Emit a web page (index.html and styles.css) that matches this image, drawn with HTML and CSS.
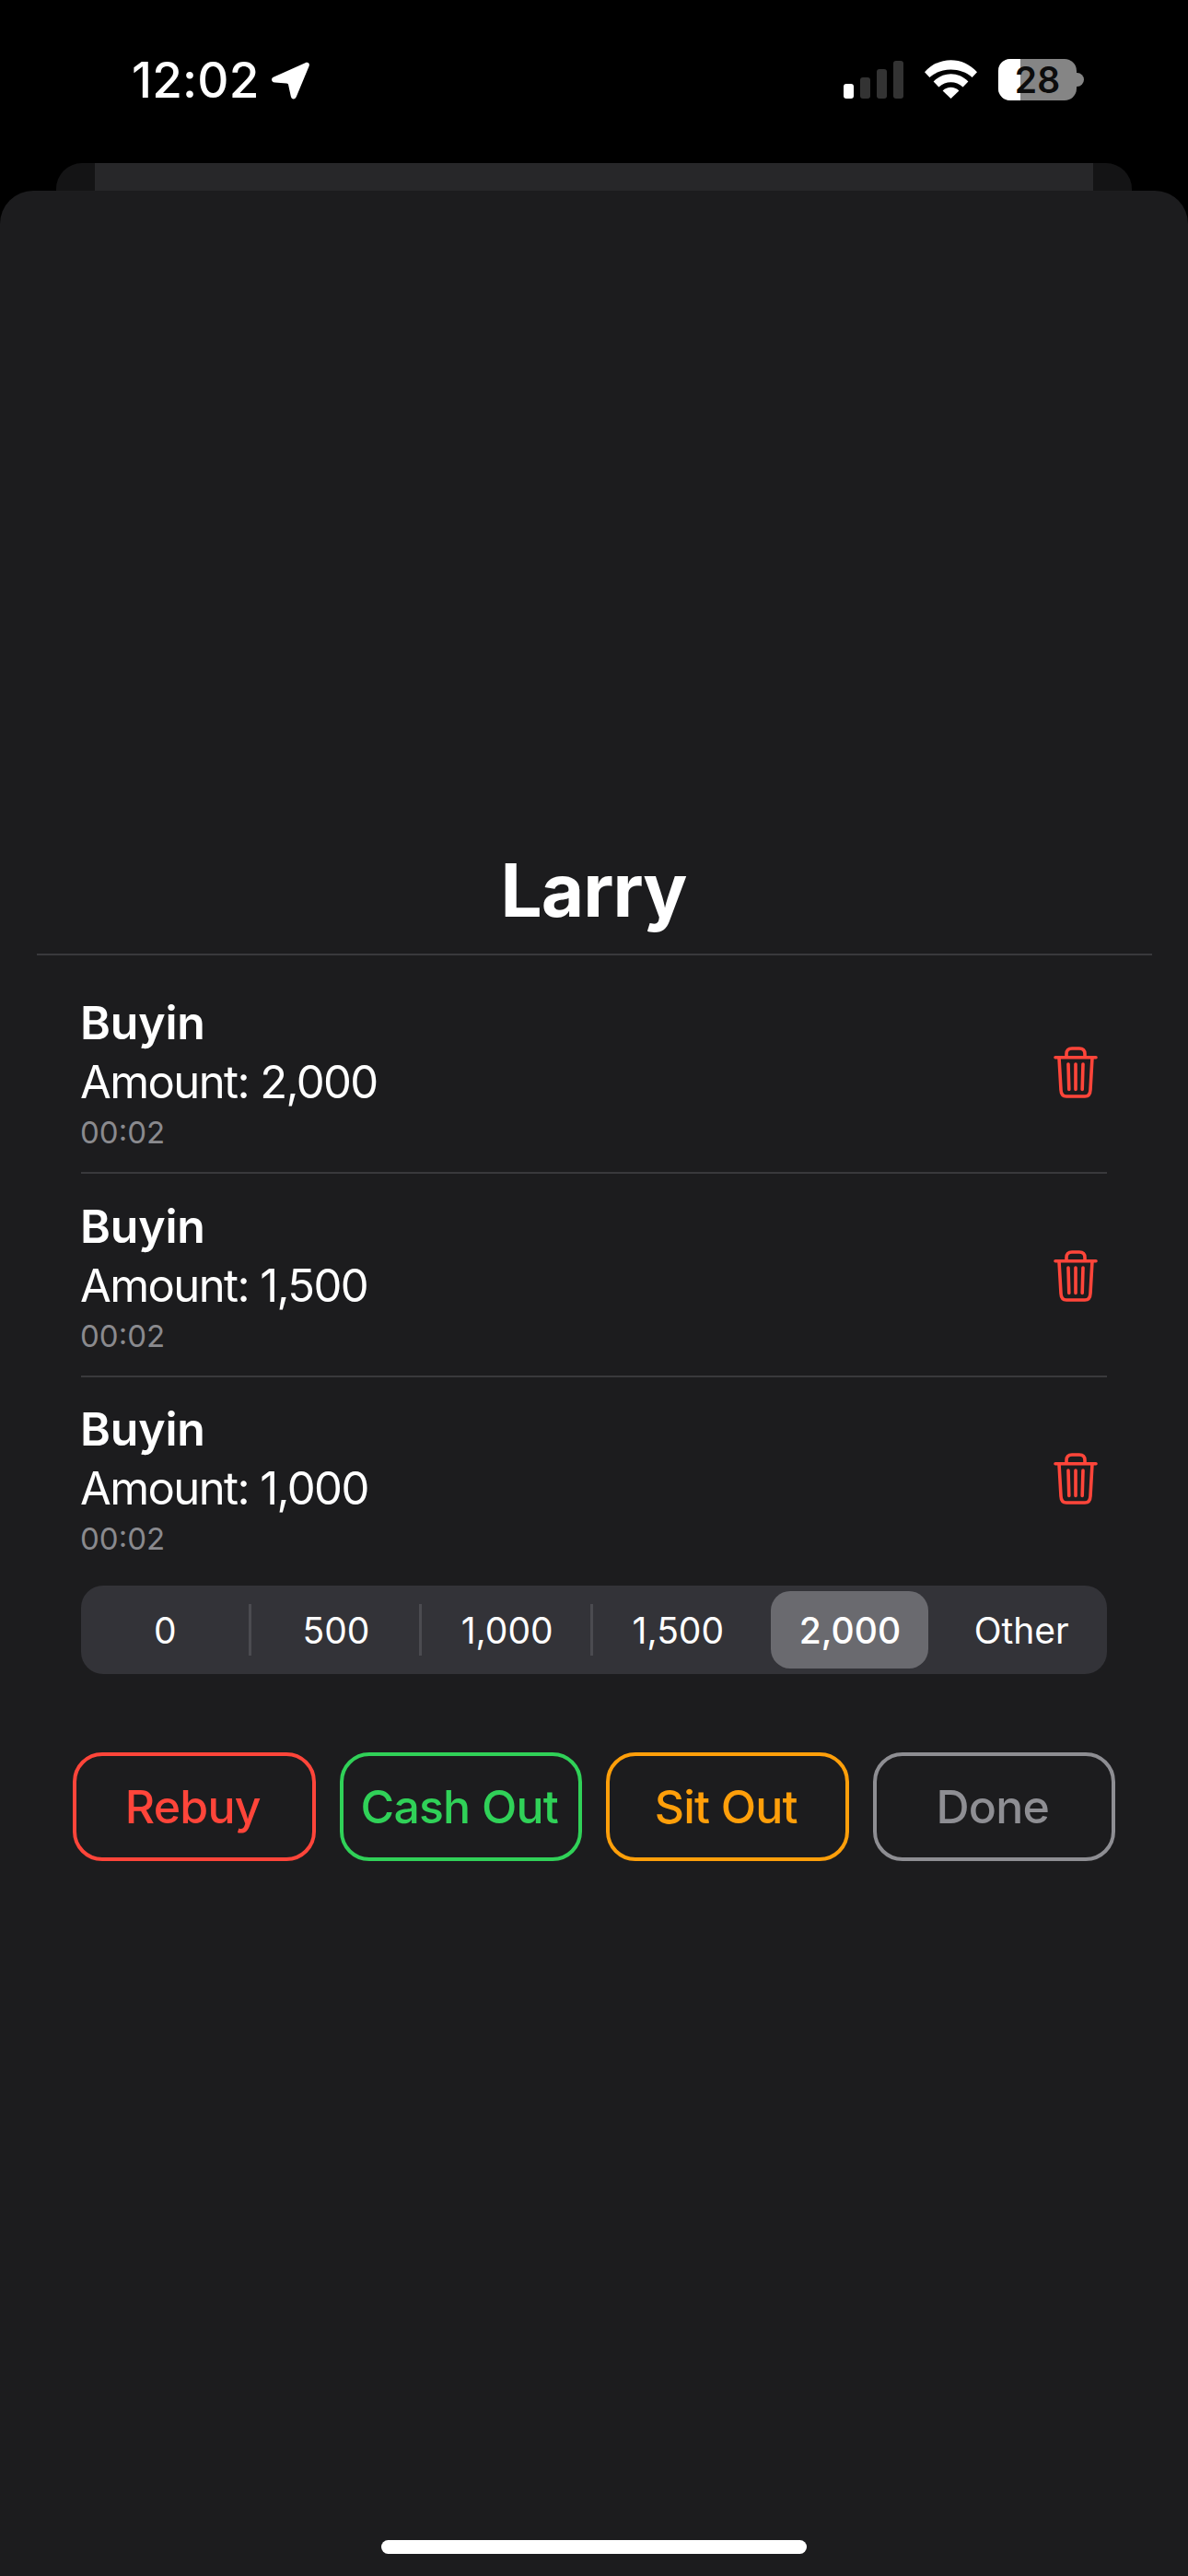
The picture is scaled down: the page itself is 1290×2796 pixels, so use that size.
FILE: index.html
```html
<!DOCTYPE html>
<html lang="en">
<head>
<meta charset="utf-8">
<title>Larry</title>
<link rel="stylesheet" href="styles.css">
</head>
<body>
<div class="screen">
  <header class="status">
    <div class="status-left">
      <span class="clock">12:02</span>
      <svg class="arrow" viewBox="0 0 41 41"><path d="M36.5 1.2C39.6 0 41.6 1.8 40.6 4.8L27 37.6C25.6 41.4 21.6 41.4 20.8 37.6L18.2 25.4C18 24.2 17.4 23.8 16.2 23.6L3.4 22.6C-0.6 22-1.2 18 2.4 16.6Z"/></svg>
    </div>
    <div class="status-right">
      <div class="signal"><i class="bar b1"></i><i class="bar b2"></i><i class="bar b3"></i><i class="bar b4"></i></div>
      <svg class="wifi" viewBox="0 0 57 42"><path d="M0 13.3C15-4.2 42-4.2 57 13.3L51.6 19C39.5 7.6 17.5 7.6 5.4 19Z"/><path d="M9.6 23.6C20 12.6 37 12.6 47.4 23.6L41.6 29.4C34 22.4 23 22.4 15.4 29.4Z"/><path d="M19.6 33.6C24.6 28.6 32.4 28.6 37.4 33.6L28.5 42Z"/></svg>
      <div class="battery">
        <div class="batt-body"><div class="batt-fill"></div><span class="batt-num">28</span></div>
        <div class="batt-cap"></div>
      </div>
    </div>
  </header>
  <div class="rear-card"><div class="rear-inner"></div></div>
  <main class="sheet">
    <h1 class="title">Larry</h1>
    <section class="list">
      <article class="row">
        <div class="row-text">
          <div class="row-kind">Buyin</div>
          <div class="row-amount">Amount: 2,000</div>
          <div class="row-time">00:02</div>
        </div>
        <svg class="trash" viewBox="0 0 48 56"><path d="M2 11.7H46M14 11V8C14 4 16 2 20 2H28C32 2 34 4 34 8V11M6 12L8 47C8.2 51.5 10.5 54 14 54H34C37.5 54 39.8 51.5 40 47L42 12M16 19L16.8 46.5M24 19V46.5M32 19L31.2 46.5"/></svg>
      </article>
      <article class="row">
        <div class="row-text">
          <div class="row-kind">Buyin</div>
          <div class="row-amount">Amount: 1,500</div>
          <div class="row-time">00:02</div>
        </div>
        <svg class="trash" viewBox="0 0 48 56"><path d="M2 11.7H46M14 11V8C14 4 16 2 20 2H28C32 2 34 4 34 8V11M6 12L8 47C8.2 51.5 10.5 54 14 54H34C37.5 54 39.8 51.5 40 47L42 12M16 19L16.8 46.5M24 19V46.5M32 19L31.2 46.5"/></svg>
      </article>
      <article class="row row-last">
        <div class="row-text">
          <div class="row-kind">Buyin</div>
          <div class="row-amount">Amount: 1,000</div>
          <div class="row-time">00:02</div>
        </div>
        <svg class="trash" viewBox="0 0 48 56"><path d="M2 11.7H46M14 11V8C14 4 16 2 20 2H28C32 2 34 4 34 8V11M6 12L8 47C8.2 51.5 10.5 54 14 54H34C37.5 54 39.8 51.5 40 47L42 12M16 19L16.8 46.5M24 19V46.5M32 19L31.2 46.5"/></svg>
      </article>
    </section>
    <div class="segments">
      <div class="seg sep">0</div>
      <div class="seg sep">500</div>
      <div class="seg sep">1,000</div>
      <div class="seg nudge">1,500</div>
      <div class="seg selected">2,000</div>
      <div class="seg">Other</div>
    </div>
    <div class="actions">
      <button class="btn red">Rebuy</button>
      <button class="btn green">Cash Out</button>
      <button class="btn orange">Sit Out</button>
      <button class="btn grey">Done</button>
    </div>
    <div class="home-indicator"></div>
  </main>
</div>
</body>
</html>
```
FILE: styles.css
```css
* { box-sizing: border-box; }
html, body { margin: 0; padding: 0; background: #000; }
body { font-family: Inter, "Liberation Sans", sans-serif; color: #fff; }
.screen { width: 1290px; height: 2796px; display: flex; flex-direction: column; overflow: hidden; }

.status { height: 177px; flex: none; display: flex; justify-content: space-between; align-items: flex-start; padding: 64px 113px 0 143px; }
.status-left { display: flex; align-items: center; gap: 13px; height: 46px; }
.clock { font-size: 53px; line-height: 46px; font-weight: 500; letter-spacing: 0.2px; }
.arrow { width: 41px; height: 41px; fill: #fff; }
.status-right { display: flex; align-items: flex-end; width: 261px; height: 45px; }
.signal { display: flex; align-items: flex-end; gap: 7px; height: 41px; margin-bottom: 2px; }
.bar { display: block; width: 11px; border-radius: 3px; background: #333; }
.b1 { height: 16px; background: #fff; }
.b2 { height: 23px; }
.b3 { height: 32px; }
.b4 { height: 41px; }
.wifi { width: 57px; height: 42px; fill: #fff; margin: 0 0 2px 23px; }
.battery { display: flex; align-items: center; margin-left: 23px; }
.batt-body { position: relative; width: 85px; height: 45px; border-radius: 13px; background: #858585; display: flex; align-items: center; justify-content: center; }
.batt-fill { position: absolute; left: 0; top: 0; bottom: 0; width: 24px; background: #fff; border-radius: 13px 0 0 13px; }
.batt-num { position: relative; font-size: 39px; line-height: 40px; font-weight: 600; color: #0c0c0c; }
.batt-cap { width: 8px; height: 15px; background: #858585; border-radius: 0 8px 8px 0; }

.rear-card { height: 30px; flex: none; margin: 0 61px; background: #141415; border-radius: 28px 28px 0 0; padding: 0 42px; }
.rear-inner { height: 100%; background: #272729; }

.sheet { flex: 1; background: #1c1c1e; border-radius: 36px 36px 0 0; display: flex; flex-direction: column; padding-top: 714px; }
.title { margin: 0 39px 0 40px; padding-right: 2px; height: 116px; border-bottom: 2px solid #39393c; text-align: center; font-size: 80px; line-height: 90px; font-weight: 700; letter-spacing: -1px; }

.list { margin: 0 88px; padding: 16px 0 5px; }
.row { height: 221px; display: flex; align-items: center; justify-content: space-between; border-bottom: 2px solid #39393c; padding-right: 10px; }
.row-last { border-bottom: 2px solid transparent; margin-top: -1px; margin-bottom: 1px; }
.row-text { margin-left: -1px; padding-top: 3px; }
.row-kind { font-size: 50px; line-height: 64px; font-weight: 600; letter-spacing: -0.2px; }
.row-amount { font-size: 49px; line-height: 66px; font-weight: 400; letter-spacing: -1.6px; }
.row-time { font-size: 33px; line-height: 42px; font-weight: 400; color: #8a8a8e; }
.trash { width: 48px; height: 56px; margin-top: 2px; fill: none; stroke: #ff453a; stroke-width: 3.6; stroke-linecap: round; stroke-linejoin: round; }

.segments { margin: 0 88px; height: 96px; background: #333338; border-radius: 24px; display: grid; grid-template-columns: repeat(6, 1fr); }
.seg { position: relative; display: flex; align-items: center; justify-content: center; font-size: 39px; font-weight: 400; margin: 6px 0; border-radius: 21px; }
.seg.sep { padding-right: 3px; }
.seg.nudge { padding-right: 3px; }
.seg.sep::after { content: ""; position: absolute; right: 1px; top: 14px; bottom: 14px; width: 3px; background: #4b4b50; }
.seg.selected { background: #6a6a6f; font-weight: 500; margin-left: 6px; margin-right: 8px; padding-left: 1px; }

.actions { display: flex; gap: 26px; margin: 85px 79px 0; }
.btn { flex: 1; height: 118px; border-radius: 32px; background: transparent; border: 4px solid; font-family: inherit; font-size: 50px; font-weight: 500; padding: 0 3px 0 0; letter-spacing: -0.8px; }
.red { color: #ff453a; border-color: #ff453a; }
.green { color: #30d158; border-color: #30d158; }
.orange { color: #ff9f0a; border-color: #ff9f0a; }
.grey { color: #8e8e93; border-color: #8e8e93; }

.home-indicator { width: 462px; height: 15px; background: #fff; border-radius: 8px; margin: auto auto 24px; flex: none; }
```
